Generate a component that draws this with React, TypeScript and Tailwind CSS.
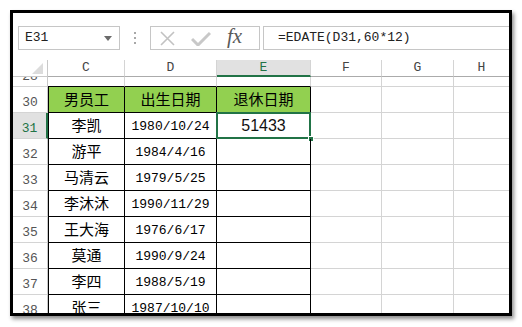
import React from 'react';

const mono = "font-['Liberation_Mono','DejaVu_Sans_Mono',monospace]";
const cjk = "font-['Noto_Sans_CJK_SC','Noto_Sans',sans-serif]";

const rows: { n: number; name: string; date: string; value?: string }[] = [
  { n: 31, name: '李凯', date: '1980/10/24', value: '51433' },
  { n: 32, name: '游平', date: '1984/4/16' },
  { n: 33, name: '马清云', date: '1979/5/25' },
  { n: 34, name: '李沐沐', date: '1990/11/29' },
  { n: 35, name: '王大海', date: '1976/6/17' },
  { n: 36, name: '莫通', date: '1990/9/24' },
  { n: 37, name: '李四', date: '1988/5/19' },
  { n: 38, name: '张三', date: '1987/10/10' },
];

const RowNum = ({ n, active }: { n: number; active?: boolean }) => (
  <div
    className={`w-[35px] shrink-0 flex items-end justify-center pb-[2px] border-b border-[#d4d4d4] text-[13px] leading-[15px] ${mono} ${
      active ? 'bg-[#e1e1e1] text-[#217346] border-r-2 border-r-[#217346]' : 'text-[#555] border-r border-r-[#c8c8c8]'
    }`}
  >
    {n}
  </div>
);

const Grey = ({ w }: { w: string }) => (
  <div className={`${w} shrink-0 border-r border-b border-[#d4d4d4]`} />
);

const Rest = () => (
  <>
    <Grey w="w-[71px]" />
    <Grey w="w-[72px]" />
    <div className="flex-1 border-b border-[#d4d4d4]" />
  </>
);

export default function App() {
  return (
    <div className="w-[522px] h-[327px] bg-white pl-[10px] pt-[10px]">
      <div className="w-[502px] h-[306px] border-[3px] border-black bg-white shadow-[2px_3px_4px_rgba(0,0,0,0.45)] overflow-hidden flex flex-col">
        {/* Formula bar */}
        <div className="flex h-[24px] mt-[13px] pl-[5px] shrink-0">
          <div className="w-[102px] border border-[#c6c6c6] flex items-center justify-between pl-[6px] pr-[7px]">
            <span className={`${mono} text-[13px] text-[#222]`}>E31</span>
            <svg width="8" height="5" viewBox="0 0 8 5">
              <path d="M0 0h8L4 5z" fill="#6b6b6b" />
            </svg>
          </div>
          <div className="w-[30px] flex flex-col items-center justify-center gap-[3px]">
            <span className="w-[2px] h-[2px] bg-[#a8a8a8]" />
            <span className="w-[2px] h-[2px] bg-[#a8a8a8]" />
            <span className="w-[2px] h-[2px] bg-[#a8a8a8]" />
          </div>
          <div className="w-[110px] border border-[#c6c6c6] flex items-center pl-[9px] gap-[16px]">
            <svg width="15" height="15" viewBox="0 0 15 15">
              <path d="M1 1l13 13M14 1L1 14" stroke="#c2c2c2" strokeWidth="1.6" />
            </svg>
            <svg width="20" height="15" viewBox="0 0 20 15">
              <path d="M1 8l6 6L19 2" stroke="#c8c8c8" strokeWidth="3" fill="none" />
            </svg>
            <span className="font-['Liberation_Serif',serif] italic text-[21px] leading-none text-[#5a5a5a] -mt-[3px]">
              fx
            </span>
          </div>
          <div className="w-[3px]" />
          <div className="flex-1 border-l border-y border-[#c6c6c6] flex items-center pl-[14px]">
            <span className={`${mono} text-[13px] text-[#222]`}>=EDATE(D31,60*12)</span>
          </div>
        </div>

        <div className="h-[10px] shrink-0" />

        {/* Column headers */}
        <div className={`flex h-[17px] shrink-0 text-[13px] text-[#444] ${mono}`}>
          <div className="w-[35px] shrink-0 border-r border-b border-[#c8c8c8] flex items-end justify-end pr-[4px] pb-[2px]">
            <svg width="11" height="11" viewBox="0 0 11 11">
              <path d="M11 0v11H0z" fill="#dcdcdc" />
            </svg>
          </div>
          <div className="w-[77px] shrink-0 border-r border-r-[#d4d4d4] border-b border-b-[#ababab] flex items-center justify-center">C</div>
          <div className="w-[92px] shrink-0 border-r border-r-[#d4d4d4] border-b border-b-[#ababab] flex items-center justify-center">D</div>
          <div className="w-[94px] shrink-0 bg-[#e1e1e1] text-[#217346] border-r border-r-[#d4d4d4] border-b-2 border-b-[#217346] flex items-center justify-center">E</div>
          <div className="w-[71px] shrink-0 border-r border-r-[#d4d4d4] border-b border-b-[#ababab] flex items-center justify-center">F</div>
          <div className="w-[72px] shrink-0 border-r border-r-[#d4d4d4] border-b border-b-[#ababab] flex items-center justify-center">G</div>
          <div className="flex-1 border-b border-b-[#ababab] flex items-center justify-center">H</div>
        </div>

        {/* Row 28, scrolled partly out */}
        <div className="flex h-[10px] shrink-0 overflow-hidden">
          <RowNum n={28} />
          <div className="w-[77px] shrink-0 border-r border-r-[#d4d4d4] border-b border-b-black" />
          <div className="w-[92px] shrink-0 border-r border-r-[#d4d4d4] border-b border-b-black" />
          <div className="w-[94px] shrink-0 border-r border-r-[#d4d4d4] border-b border-b-black" />
          <Rest />
        </div>

        {/* Row 30 headers */}
        <div className="flex h-[26px] shrink-0">
          <RowNum n={30} />
          {['男员工', '出生日期', '退休日期'].map((t, i) => (
            <div
              key={t}
              className={`${['w-[77px] border-l', 'w-[92px]', 'w-[94px]'][i]} shrink-0 bg-[#92d050] border-r border-b border-black flex items-center justify-center text-[15px] text-black ${cjk}`}
            >
              {t}
            </div>
          ))}
          <Rest />
        </div>

        {rows.map((r) => (
          <div key={r.n} className="flex h-[26px] shrink-0">
            <RowNum n={r.n} active={r.n === 31} />
            <div className={`w-[77px] shrink-0 border-l border-r border-b border-black flex items-center justify-center text-[15px] text-black ${cjk}`}>
              {r.name}
            </div>
            <div className={`w-[92px] shrink-0 border-r border-b border-black flex items-center justify-center text-[13px] text-black pt-[2px] ${mono}`}>
              {r.date}
            </div>
            <div className="w-[94px] shrink-0 border-r border-b border-black flex items-center justify-center relative">
              {r.value && (
                <>
                  <span className="font-['Liberation_Sans',Arial,sans-serif] text-[16px] text-[#111]">{r.value}</span>
                  <div className="absolute -top-[1px] -left-[1px] -right-[1px] -bottom-[1px] border-2 border-[#217346]" />
                  <div className="absolute -right-[4px] -bottom-[4px] w-[6px] h-[6px] bg-[#217346] border border-white" />
                </>
              )}
            </div>
            <Rest />
          </div>
        ))}
      </div>
    </div>
  );
}
